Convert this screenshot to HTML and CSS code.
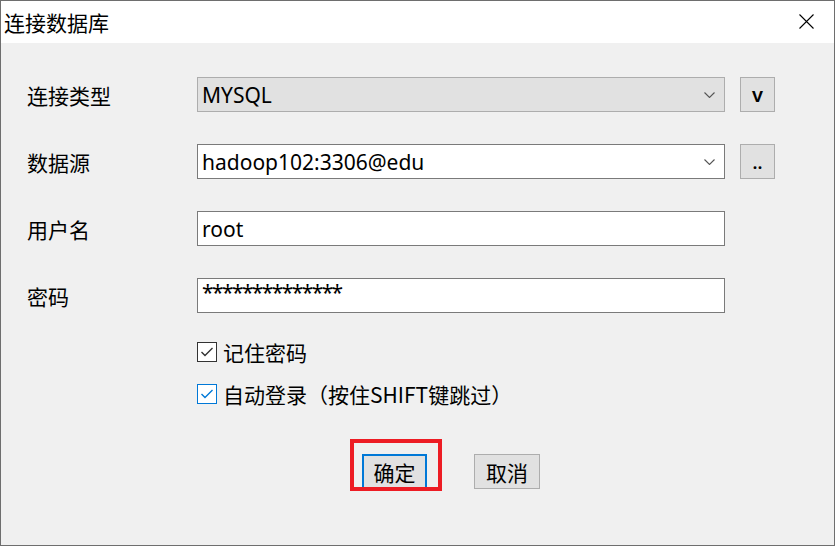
FILE: index.html
```html
<!DOCTYPE html>
<html lang="zh-CN">
<head>
<meta charset="utf-8">
<title>连接数据库</title>
<link rel="stylesheet" href="styles.css">
</head>
<body>
<div class="dialog">
  <div class="titlebar">
    <span class="title">连接数据库</span>
    <svg class="close" width="15" height="15" viewBox="0 0 15 15"><path d="M0.5 0.5 L14.5 14.5 M14.5 0.5 L0.5 14.5" stroke="#000" stroke-width="1.1" fill="none"/></svg>
  </div>
  <div class="content">
    <div class="form">
      <div class="label">连接类型</div>
      <div class="combo combo-ro">
        <span class="combo-text">MYSQL</span>
        <svg class="chev" width="11" height="6" viewBox="0 0 11 6"><path d="M0.5 0.5 L5.5 5.5 L10.5 0.5" stroke="#555" stroke-width="1.1" fill="none"/></svg>
      </div>
      <button class="side-btn">v</button>

      <div class="label">数据源</div>
      <div class="combo">
        <span class="combo-text">hadoop102:3306@edu</span>
        <svg class="chev" width="11" height="6" viewBox="0 0 11 6"><path d="M0.5 0.5 L5.5 5.5 L10.5 0.5" stroke="#555" stroke-width="1.1" fill="none"/></svg>
      </div>
      <button class="side-btn dots">..</button>

      <div class="label">用户名</div>
      <input class="field" type="text" value="root">
      <div></div>

      <div class="label">密码</div>
      <input class="field pwd" type="text" value="**************">
      <div></div>
    </div>

    <div class="checks">
      <label class="check">
        <span class="box">
          <svg width="14" height="12" viewBox="0 0 14 12"><path d="M1.5 6 L5 9.5 L12.5 2" stroke="#333" stroke-width="1.4" fill="none"/></svg>
        </span>
        <span>记住密码</span>
      </label>
      <label class="check">
        <span class="box box-focus">
          <svg width="14" height="12" viewBox="0 0 14 12"><path d="M1.5 6 L5 9.5 L12.5 2" stroke="#0078d7" stroke-width="1.4" fill="none"/></svg>
        </span>
        <span>自动登录（按住SHIFT键跳过）</span>
      </label>
    </div>

    <div class="actions">
      <div class="ok-wrap">
        <button class="btn btn-primary">确定</button>
        <span class="highlight"></span>
      </div>
      <button class="btn">取消</button>
    </div>
  </div>
</div>
</body>
</html>
```

FILE: styles.css
```css
html, body {
  margin: 0;
  padding: 0;
  background: #ffffff;
}

body {
  width: 836px;
  height: 546px;
  overflow: hidden;
  font-family: "Noto Sans CJK SC", "Noto Sans", sans-serif;
  color: #000;
}

.dialog {
  width: 833px;
  height: 544px;
  border: 1px solid #6e6e6e;
  background: #f0f0f0;
  display: flex;
  flex-direction: column;
}

.titlebar {
  height: 42px;
  background: #ffffff;
  display: flex;
  align-items: center;
  justify-content: space-between;
  padding: 0 20px 0 3px;
  flex-shrink: 0;
}

.title {
  font-size: 21px;
  line-height: 24px;
  font-family: "Noto Sans CJK SC", sans-serif;
  margin-top: -1px;
}

.close {
  display: block;
  margin-top: -1px;
}

.content {
  padding: 34px 0 0 26px;
  display: flex;
  flex-direction: column;
}

.form {
  display: grid;
  grid-template-columns: 170px 528px auto;
  grid-auto-rows: 35px;
  row-gap: 32px;
  align-items: center;
}

.label {
  font-size: 21px;
  line-height: 24px;
  font-family: "Noto Sans CJK SC", sans-serif;
}

.combo,
.field {
  box-sizing: border-box;
  height: 35px;
  width: 528px;
  border: 1px solid #7a7a7a;
  background: #ffffff;
  font-family: "Noto Sans", "Noto Sans CJK SC", sans-serif;
  font-size: 21px;
  color: #000;
}

.combo {
  display: flex;
  align-items: center;
  justify-content: space-between;
  padding: 0 9px 0 4px;
}

.combo-ro {
  background: #e1e1e1;
  border-color: #adadad;
}

.combo-text {
  line-height: 26px;
}

.chev {
  display: block;
}

.field {
  margin: 0;
  padding: 0 0 0 4px;
  outline: none;
  line-height: 26px;
}

.pwd {
  letter-spacing: -1.6px;
  padding-bottom: 8px;
}

.side-btn {
  margin: 0 0 0 15px;
  width: 35px;
  height: 35px;
  box-sizing: border-box;
  border: 1px solid #adadad;
  background: #e1e1e1;
  font-family: "Noto Sans", sans-serif;
  font-size: 20px;
  font-weight: 600;
  color: #000;
  padding: 0;
  line-height: 30px;
}

.dots {
  font-size: 18px;
  line-height: 34px;
}

.checks {
  margin: 29px 0 0 170px;
  display: flex;
  flex-direction: column;
  gap: 22px;
}

.check {
  display: flex;
  align-items: center;
  gap: 6px;
  height: 20px;
  font-size: 21px;
  font-family: "Noto Sans CJK SC", "Noto Sans", sans-serif;
  line-height: 24px;
}

.box {
  box-sizing: border-box;
  width: 20px;
  height: 20px;
  border: 1px solid #333;
  background: #fff;
  display: flex;
  align-items: center;
  justify-content: center;
  flex-shrink: 0;
}

.box svg {
  display: block;
}

.box-focus {
  border-color: #0078d7;
}

.actions {
  margin: 50px 0 0 335px;
  display: flex;
  gap: 47px;
}

.ok-wrap {
  position: relative;
}

.btn {
  box-sizing: border-box;
  width: 66px;
  height: 35px;
  border: 1px solid #adadad;
  background: #e1e1e1;
  font-family: "Noto Sans CJK SC", sans-serif;
  font-size: 21px;
  line-height: 24px;
  color: #000;
  padding: 0;
  display: block;
}

.btn-primary {
  width: 65px;
  border: 2px solid #0078d7;
}

.highlight {
  position: absolute;
  left: -12px;
  top: -15px;
  width: 92px;
  height: 52px;
  box-sizing: border-box;
  border: 4px solid #ed1c24;
  pointer-events: none;
}
```
